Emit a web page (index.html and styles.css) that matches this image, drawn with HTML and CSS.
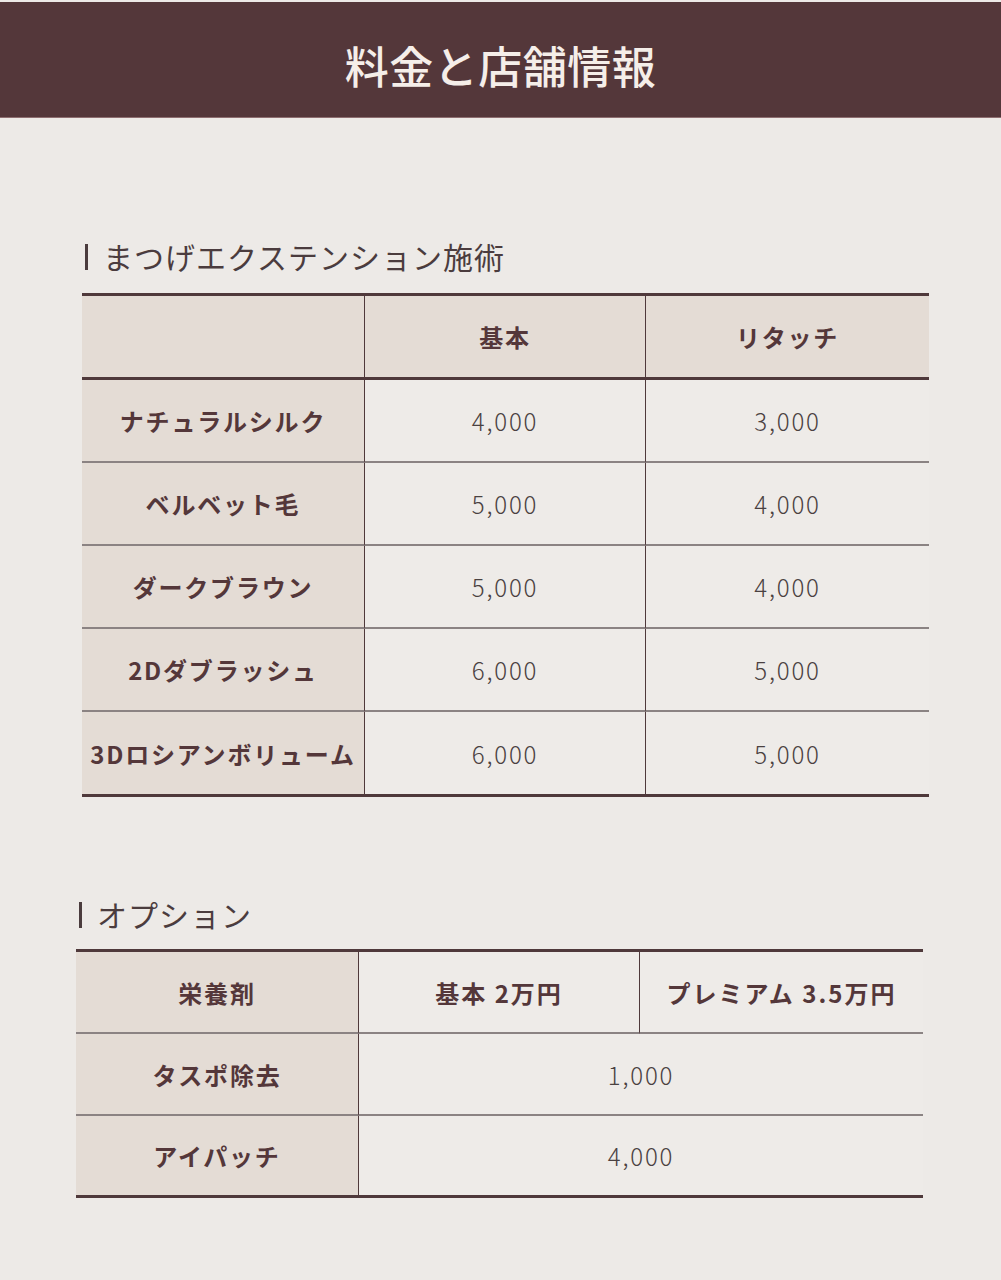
FILE: index.html
```html
<!DOCTYPE html>
<html lang="ja">
<head>
<meta charset="utf-8">
<title>料金と店舗情報</title>
<link rel="stylesheet" href="styles.css">
</head>
<body>
<header class="page-header">
  <h1 class="page-title">料金と店舗情報</h1>
</header>
<main class="content">
  <section class="price-section lash">
    <h2 class="section-title">まつげエクステンション施術</h2>
    <table class="price-table">
      <colgroup><col class="c1"><col class="c2"><col class="c3"></colgroup>
      <thead>
        <tr>
          <th class="label"></th>
          <th>基本</th>
          <th class="last">リタッチ</th>
        </tr>
      </thead>
      <tbody>
        <tr><th class="label">ナチュラルシルク</th><td>4,000</td><td class="last">3,000</td></tr>
        <tr><th class="label">ベルベット毛</th><td>5,000</td><td class="last">4,000</td></tr>
        <tr><th class="label">ダークブラウン</th><td>5,000</td><td class="last">4,000</td></tr>
        <tr><th class="label">2Dダブラッシュ</th><td>6,000</td><td class="last">5,000</td></tr>
        <tr class="end"><th class="label">3Dロシアンボリューム</th><td>6,000</td><td class="last">5,000</td></tr>
      </tbody>
    </table>
  </section>
  <section class="price-section option">
    <h2 class="section-title">オプション</h2>
    <table class="price-table opt">
      <colgroup><col class="c1"><col class="c2"><col class="c3"></colgroup>
      <tbody>
        <tr><th class="label">栄養剤</th><th class="plain">基本 2万円</th><th class="plain last">プレミアム 3.5万円</th></tr>
        <tr><th class="label">タスポ除去</th><td colspan="2" class="last">1,000</td></tr>
        <tr class="end"><th class="label">アイパッチ</th><td colspan="2" class="last">4,000</td></tr>
      </tbody>
    </table>
  </section>
</main>
</body>
</html>
```
FILE: styles.css
```css
html, body {
  margin: 0;
  padding: 0;
}
body {
  background: #edeae7;
  font-family: "Noto Sans CJK JP", "Noto Sans", sans-serif;
  color: #4b3c3e;
}
.page-header {
  margin-top: 2px;
  height: 116px;
  padding-top: 10px;
  background: #54373a;
  display: flex;
  align-items: center;
  justify-content: center;
  border-bottom: 1px solid #8e6e70;
  box-sizing: border-box;
}
.page-title {
  margin: 0;
  font-size: 44px;
  font-weight: 500;
  color: #f5eee9;
  line-height: 1;
  letter-spacing: 0.5px;
}
.content {
  padding-bottom: 80px;
}
.price-section.lash {
  padding: 117px 0 0 82px;
}
.price-section.option {
  padding: 96px 0 0 76px;
}
.section-title {
  margin: 0 0 16px;
  font-size: 30px;
  font-weight: 400;
  line-height: 42px;
  letter-spacing: 1px;
  color: #4b3c3e;
  display: flex;
  align-items: center;
}
.option .section-title {
  margin-bottom: 14px;
}
.section-title::before {
  content: "";
  width: 3px;
  height: 26px;
  background: #4b3c3e;
  margin: 2px 15px 0 3px;
}
.price-table {
  width: 847px;
  table-layout: fixed;
  border-collapse: separate;
  border-spacing: 0;
  border-top: 3px solid #4f393b;
  border-bottom: 3px solid #4f393b;
}
.price-table .c1 { width: 283px; }
.price-table .c2 { width: 281px; }
.price-table .c3 { width: 283px; }
.price-table th,
.price-table td {
  padding: 0;
  text-align: center;
  vertical-align: middle;
  font-size: 24px;
  letter-spacing: 1.8px;
  white-space: nowrap;
  border-right: 1px solid #4f393b;
  border-bottom: 2px solid #8b8383;
  height: 81px;
}
.price-table th.last,
.price-table td.last {
  border-right: none;
}
.price-table th {
  font-weight: 700;
  color: #54373a;
}
.price-table td {
  font-weight: 300;
  color: #4a4141;
  background: #eeebe8;
}
.price-table th.label {
  background: #e4dcd5;
  letter-spacing: 1.8px;
}
.price-table thead th {
  background: #e4dcd5;
  border-bottom: 3px solid #4f393b;
}
.price-table th.plain {
  background: #eeebe8;
  letter-spacing: 2px;
}
.price-table tr.end th,
.price-table tr.end td {
  border-bottom: none;
  height: 82px;
}
.price-table.opt th,
.price-table.opt td {
  height: 80px;
}
.price-table.opt tr.end th,
.price-table.opt tr.end td {
  height: 79px;
}
```
